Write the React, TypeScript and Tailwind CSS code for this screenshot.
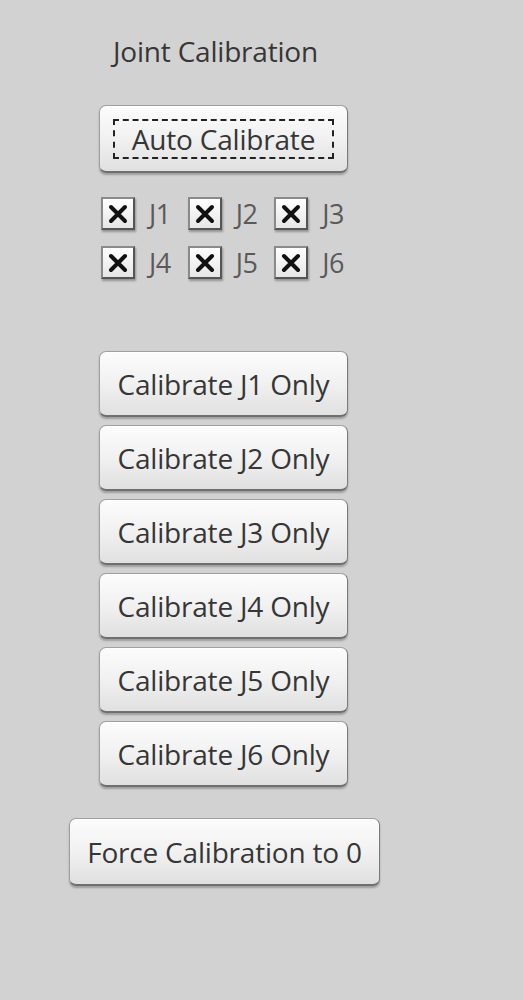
import React from "react";

const font = { fontFamily: '"Open Sans", "Noto Sans", sans-serif' };

function Btn({ children, className = "", focus = false }: { children: React.ReactNode; className?: string; focus?: boolean }) {
  return (
    <div
      className={
        "flex items-center justify-center rounded-[7px] border border-[#a0a0a0] border-b-[#6f6f6f] border-r-[#7a7a7a] border-b-2 bg-gradient-to-b from-[#fcfcfc] via-[#f1f1f1] to-[#e0e0e0] shadow-[0_2px_2px_rgba(0,0,0,0.25),inset_0_1px_0_#ffffff] text-[#363636] tracking-[-0.2px] " +
        className
      }
    >
      {focus ? (
        <div className="flex h-[40px] w-[221px] items-center justify-center border-2 border-dashed border-[#222]">
          {children}
        </div>
      ) : (
        children
      )}
    </div>
  );
}

function Check({ label }: { label: string }) {
  return (
    <div className="flex items-center gap-[14px]">
      <div className="flex h-[33px] w-[34px] items-center justify-center border-2 border-[#8a8a8a] border-b-[#555] border-r-[#555] bg-gradient-to-b from-[#ffffff] to-[#e6e6e6] shadow-[1px_2px_2px_rgba(0,0,0,0.3)]">
        <svg width="20" height="20" viewBox="0 0 20 20">
          <path d="M3 3 L17 17 M17 3 L3 17" stroke="#111" strokeWidth="4" strokeLinecap="round" />
        </svg>
      </div>
      <span className="text-[27px] text-[#5a5a5a] leading-none tracking-[-0.5px]">{label}</span>
    </div>
  );
}

export default function App() {
  const joints = [1, 2, 3, 4, 5, 6];
  return (
    <div className="min-h-[1000px] w-[523px] bg-[#d2d2d2]" style={font}>
      <div className="flex w-[380px] flex-col pl-[69px] pt-[33px]">
        <div className="ml-[44px] text-[28px] leading-[36px] text-[#363636] tracking-[-0.2px]">Joint Calibration</div>
        <Btn className="ml-[30px] mt-[36px] h-[68px] w-[249px] text-[28px]" focus>
          Auto Calibrate
        </Btn>
        <div className="ml-[32px] mt-[24px] grid w-[260px] grid-cols-3 gap-y-[16px]">
          {joints.map((j) => (
            <Check key={j} label={`J${j}`} />
          ))}
        </div>
        <div className="ml-[30px] mt-[72px] flex flex-col gap-[8px]">
          {joints.map((j) => (
            <Btn key={j} className="h-[66px] w-[249px] text-[28px]">
              {`Calibrate J${j} Only`}
            </Btn>
          ))}
        </div>
        <Btn className="mt-[31px] h-[68px] w-[311px] text-[28px]">Force Calibration to 0</Btn>
      </div>
    </div>
  );
}
